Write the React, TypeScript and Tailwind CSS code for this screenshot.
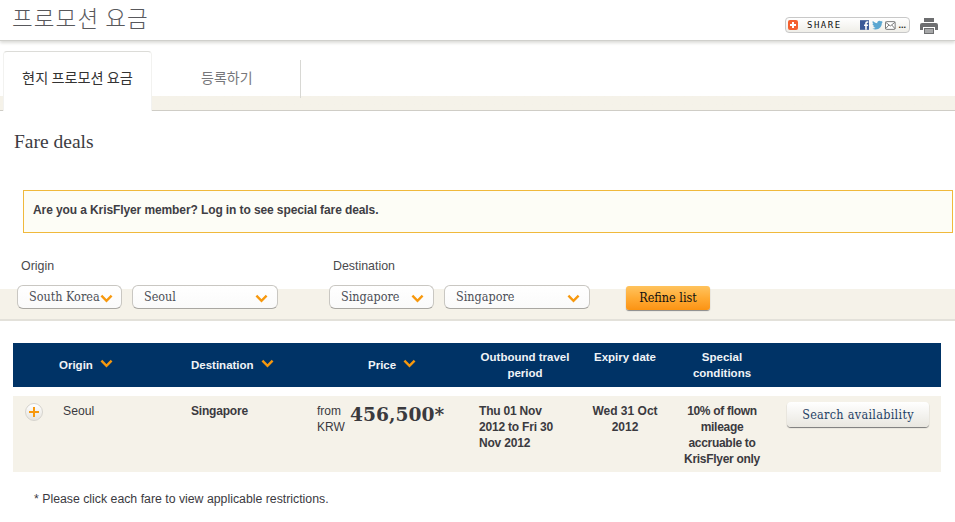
const sans = 'font-["Liberation_Sans",Arial,sans-serif]';
const slab = 'font-["DejaVu_Serif_Condensed","DejaVu_Serif",serif]';

function Chevron({ className }: { className?: string }) {
  return (
    <svg viewBox="0 0 14 9" className={className} fill="none" stroke="#f7980d" strokeWidth="2.6">
      <path d="M1.5 1.5 7 7l5.5-5.5" />
    </svg>
  );
}

function Select({ label, width }: { label: string; width: string }) {
  return (
    <div className={`${width} h-6 flex items-center justify-between pl-[11px] pr-[9px] bg-gradient-to-b from-white to-[#fafafa] border border-[#c9c7c2] border-b-[#a9a7a2] rounded-[6px] ${slab} text-[12.5px] text-[#4c4f57]`}>
      <span className="whitespace-nowrap">{label}</span>
      <Chevron className="w-[13px] h-[9px] shrink-0 mt-[2px]" />
    </div>
  );
}

function SortHead({ label, className }: { label: string; className: string }) {
  return (
    <div className={`${className} flex items-center gap-[7px]`}>
      <span>{label}</span>
      <Chevron className="w-[13px] h-[9px] -mt-[3px]" />
    </div>
  );
}

export default function App() {
  return (
    <div className={`w-[955px] h-[522px] overflow-hidden bg-white text-[12px] leading-4 text-[#3b3a3f] ${sans}`}>
      {/* title bar */}
      <div className="h-[41px] flex items-start justify-between pl-[12px] pr-[17px] border-b border-[#d0d0cc] shadow-[0_2px_3px_#dcdcd8]">
        <h1 className='font-["Noto_Sans_CJK_KR",sans-serif] font-light text-[22.5px] leading-[34px] tracking-[1.1px] text-[#58585c]'>프로모션 요금</h1>
        <div className="flex items-center gap-[10px] mt-[16px]">
          <div className="w-[125px] h-[16px] flex items-center pl-[2px] pr-[3px] border border-[#c8c8c8] rounded-[4px] bg-gradient-to-b from-white to-[#efeee8]">
            <span className="w-[10px] h-[10px] rounded-[2px] bg-[#f4602f] flex items-center justify-center">
              <svg viewBox="0 0 10 10" className="w-[10px] h-[10px]" stroke="#fff" strokeWidth="2">
                <path d="M5 2v6M2 5h6" />
              </svg>
            </span>
            <span className='ml-[9px] font-["DejaVu_Sans_Mono",monospace] text-[9px] tracking-[1.5px] text-[#111]'>SHARE</span>
            <svg viewBox="0 0 10 10" className="w-[10px] h-[10px] ml-[18px]">
              <rect width="10" height="10" fill="#3b5998" />
              <path d="M7 10V6h1.3l.2-1.6H7v-1c0-.5.2-.8.8-.8h.8V1.2H7.500C6.200 1.200 5.400 2 5.400 3.200v1.200H4.200V6h1.200v4z" fill="#fff" />
            </svg>
            <svg viewBox="0 0 12 10" className="w-[11px] h-[10px] ml-[3px]">
              <path d="M12 1.300c-.4.200-.9.300-1.400.4.500-.3.900-.8 1.100-1.400-.5.300-1 .5-1.600.6C9.600.4 9 .1 8.300.1 7 .1 5.900 1.200 5.900 2.500c0 .2 0 .4.100.6C4 3 2.200 2 1 .6.700 1 .6 1.400.6 1.900c0 .8.400 1.600 1.100 2-.4 0-.8-.1-1.100-.3 0 1.200.8 2.200 1.900 2.400-.4.100-.7.100-1.100 0 .3 1 1.200 1.700 2.300 1.700C3.800 8.400 2.500 8.900 1 8.900l-.6 0c1.100.7 2.300 1.100 3.700 1.100 4.500 0 7-3.700 7-7v-.3c.4-.3.900-.8 1.200-1.400z" fill="#5ba7d1" />
            </svg>
            <svg viewBox="0 0 11 9" className="w-[11px] h-[9px] ml-[2px]" fill="#fff" stroke="#777">
              <rect x=".5" y=".5" width="10" height="8" rx="1" />
              <path d="m.5 1 5 4 5-4M.5 8l3.500-4M10.500 8 7 4" fill="none" />
            </svg>
            <span className="ml-[3px] text-[9px] leading-[8px] font-bold text-[#222]">...</span>
          </div>
          <svg viewBox="0 0 18 16" className="w-[18px] h-[16px] mt-[2px]" fill="#6d6e70">
            <path d="M4 0h10v4H4zM2 5h14a2 2 0 0 1 2 2v5h-3V9H3v3H0V7a2 2 0 0 1 2-2z" />
            <path d="M4 10h10v6H4z" />
            <path d="M5 12h8M5 14h8" stroke="#fff" strokeWidth=".8" />
          </svg>
        </div>
      </div>

      {/* tabs */}
      <div className="h-[60px] mt-[10px] pl-[3px] border-b border-[#cfcdc6] bg-gradient-to-b from-white from-[77%] to-[#f5f2e9] to-[77%] flex">
        <div className="relative z-10 w-[149px] h-[60px] bg-white border-t border-x border-x-[#f2f2f0] border-t-[#dcdcd8] rounded-t-[4px] text-center pt-[17px] text-[14.2px] text-[#333] font-['Noto_Sans_CJK_KR',sans-serif]">
          현지 프로모션 요금
        </div>
        <div className="w-[149px] h-[38px] border-r border-[#d8d8d4] mt-[9px] pl-[49px] pt-[9px] text-[14px] text-[#77777b] font-['Noto_Sans_CJK_KR',sans-serif]">
          등록하기
        </div>
      </div>

      <h2 className='ml-[14px] mt-[19px] font-["Liberation_Serif",serif] text-[19.5px] leading-6 text-[#3c3c42]'>Fare deals</h2>

      {/* login notice */}
      <div className="ml-[23px] mr-[2px] mt-[36px] h-[43px] flex items-center pl-[9px] pb-[4px] bg-[#fdfdf6] border border-[#f0b93c] font-bold tracking-[-0.1px] text-[#3f3e44]">
        Are you a KrisFlyer member? Log in to see special fare deals.
      </div>

      {/* filters */}
      <div className="flex mt-[25px] h-4 pl-[21px] text-[12.4px] text-[#4a4a4e]">
        <span className="w-[312px]">Origin</span>
        <span>Destination</span>
      </div>
      <div className="mt-[15px] h-[32px] border-b-2 border-[#e3e1da] bg-[#f5f2e9] flex items-start pl-[17px]">
        <div className="-mt-[4px] flex gap-[10px]">
          <Select label="South Korea" width="w-[105px]" />
          <Select label="Seoul" width="w-[146px]" />
        </div>
        <div className="-mt-[4px] ml-[51px] flex gap-[10px]">
          <Select label="Singapore" width="w-[105px]" />
          <Select label="Singapore" width="w-[146px]" />
        </div>
        <button className={`-mt-[3px] ml-[36px] w-[84px] h-6 rounded-[3px] bg-gradient-to-b from-[#ffc35c] via-[#ffab33] to-[#fb9311] shadow-[0_1px_1px_#888] ${slab} text-[12.5px] text-[#111]`}>
          Refine list
        </button>
      </div>

      {/* results table */}
      <div className="mx-[13px] mt-[22px] w-[928px]">
        <div className="h-[44px] bg-[#003366] flex items-center text-[11.5px] font-bold text-[#f0f3f7] text-center">
          <SortHead label="Origin" className="w-[178px] pl-[46px]" />
          <SortHead label="Destination" className="w-[177px]" />
          <SortHead label="Price" className="w-[102px]" />
          <div className="w-[110px]">Outbound travel period</div>
          <div className="w-[90px] self-start pt-[6px]">Expiry date</div>
          <div className="w-[104px] px-[20px]">Special conditions</div>
        </div>

        <div className="mt-[9px] h-[76px] bg-[#f5f2e9] flex pt-[7px]">
          <div className="w-[50px] pl-[12px]">
            <div className="w-[18px] h-[18px] rounded-full bg-gradient-to-b from-white to-[#e6e4de] border border-[#d6d4ce] flex items-center justify-center">
              <svg viewBox="0 0 10 10" className="w-[10px] h-[10px]" stroke="#f7980d" strokeWidth="2">
                <path d="M5 0v10M0 5h10" />
              </svg>
            </div>
          </div>
          <div className="w-[128px] text-[12.2px]">Seoul</div>
          <div className="w-[126px] font-bold tracking-[-0.2px]">Singapore</div>
          <div className="w-[162px] flex items-start">
            <div className="w-[33px]">from KRW</div>
            <div className={'mt-[3px] font-["DejaVu_Serif",serif] font-bold text-[18.7px] leading-4 text-[#3a3a3e] whitespace-nowrap'}>456,500*</div>
          </div>
          <div className="w-[101px] pr-[14px] font-bold tracking-[-0.2px]">Thu 01 Nov 2012 to Fri 30 Nov 2012</div>
          <div className="w-[90px] px-[8px] font-bold text-center">Wed 31 Oct 2012</div>
          <div className="w-[104px] px-[9px] font-bold tracking-[-0.3px] text-center">10% of flown mileage accruable to KrisFlyer only</div>
          <button className={`ml-[13px] w-[142px] h-[25px] -mt-[1px] rounded-[4px] bg-gradient-to-b from-white to-[#e9e7e0] shadow-[0_1px_1px_#777] ${slab} text-[12.5px] tracking-[0.3px] text-[#1f3f66]`}>
            Search availability
          </button>
        </div>
      </div>

      <p className="ml-[34px] mt-[19px] text-[12.3px]">* Please click each fare to view applicable restrictions.</p>
    </div>
  );
}
